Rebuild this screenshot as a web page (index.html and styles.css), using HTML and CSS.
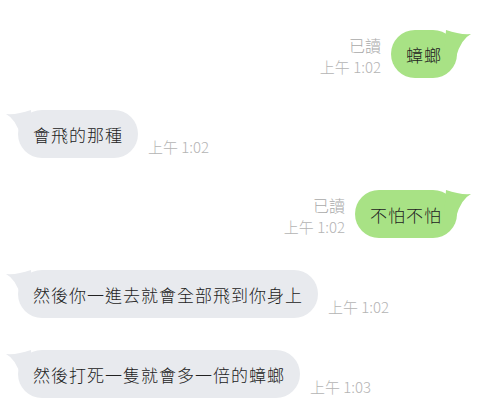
FILE: index.html
```html
<!DOCTYPE html>
<html lang="zh-Hant">
<head>
    <meta charset="UTF-8">
    <meta name="viewport" content="width=device-width, initial-scale=1.0">
    <title>聊天</title>
    <link rel="stylesheet" href="styles.css">
</head>
<body>
    <div class="chat">
        <!-- 自己 -->
        <div class="row out">
            <div class="meta">
                <span class="read">已讀</span>
                <span class="time">上午 1:02</span>
            </div>
            <div class="bubble green">
                蟑螂
                <svg class="tail" viewBox="0 0 28 28" width="28" height="28"><path d="M2 0 Q16 5 27 4 Q17 9 12 27 L0 27 Z"/></svg>
            </div>
        </div>

        <div class="row in">
            <div class="bubble grey">
                會飛的那種
                <svg class="tail" viewBox="0 0 28 28" width="28" height="28"><path d="M2 0 Q16 5 27 4 Q17 9 12 27 L0 27 Z"/></svg>
            </div>
            <div class="meta">
                <span class="time">上午 1:02</span>
            </div>
        </div>

        <div class="row out">
            <div class="meta">
                <span class="read">已讀</span>
                <span class="time">上午 1:02</span>
            </div>
            <div class="bubble green">
                不怕不怕
                <svg class="tail" viewBox="0 0 28 28" width="28" height="28"><path d="M2 0 Q16 5 27 4 Q17 9 12 27 L0 27 Z"/></svg>
            </div>
        </div>

        <div class="row in">
            <div class="bubble grey">
                然後你一進去就會全部飛到你身上
                <svg class="tail" viewBox="0 0 28 28" width="28" height="28"><path d="M2 0 Q16 5 27 4 Q17 9 12 27 L0 27 Z"/></svg>
            </div>
            <div class="meta">
                <span class="time">上午 1:02</span>
            </div>
        </div>

        <div class="row in">
            <div class="bubble grey">
                然後打死一隻就會多一倍的蟑螂
                <svg class="tail" viewBox="0 0 28 28" width="28" height="28"><path d="M2 0 Q16 5 27 4 Q17 9 12 27 L0 27 Z"/></svg>
            </div>
            <div class="meta">
                <span class="time">上午 1:03</span>
            </div>
        </div>
    </div>
</body>
</html>
```

FILE: styles.css
```css
/* Grundlegende Stile */
html, body {
    margin: 0;
    padding: 0;
    background-color: #ffffff;
    font-family: "Noto Sans CJK TC", "Noto Sans", sans-serif;
    color: #222;
}

/* Chat-Verlauf */
.chat {
    display: flex;
    flex-direction: column;
    gap: 32px;
    padding: 30px 20px 0 18px;
}

.row {
    display: flex;
    align-items: flex-end;
    gap: 10px;
}
.row.out {
    justify-content: flex-end;
}
.row.in {
    justify-content: flex-start;
}

/* Sprechblasen */
.bubble {
    position: relative;
    height: 48px;
    padding: 0 15px;
    border-radius: 24px;
    display: flex;
    align-items: center;
    font-size: 17px;
    font-weight: 300;
    letter-spacing: 1px;
    white-space: nowrap;
}
.bubble.green {
    background-color: #a8e285;
}
.bubble.grey {
    background-color: #e8eaee;
}

/* Zipfel der Blase */
.tail {
    position: absolute;
    top: 0;
}
.green .tail {
    right: -15px;
    fill: #a8e285;
}
.grey .tail {
    left: -13px;
    fill: #e8eaee;
    transform: scaleX(-1);
}

/* Zeit und Gelesen */
.meta {
    display: flex;
    flex-direction: column;
    text-align: right;
    font-size: 15px;
    font-weight: 300;
    line-height: 21px;
    color: #b4b4b4;
    padding-bottom: 1px;
}
.read {
    font-size: 16px;
    color: #a9a9a9;
}
```
